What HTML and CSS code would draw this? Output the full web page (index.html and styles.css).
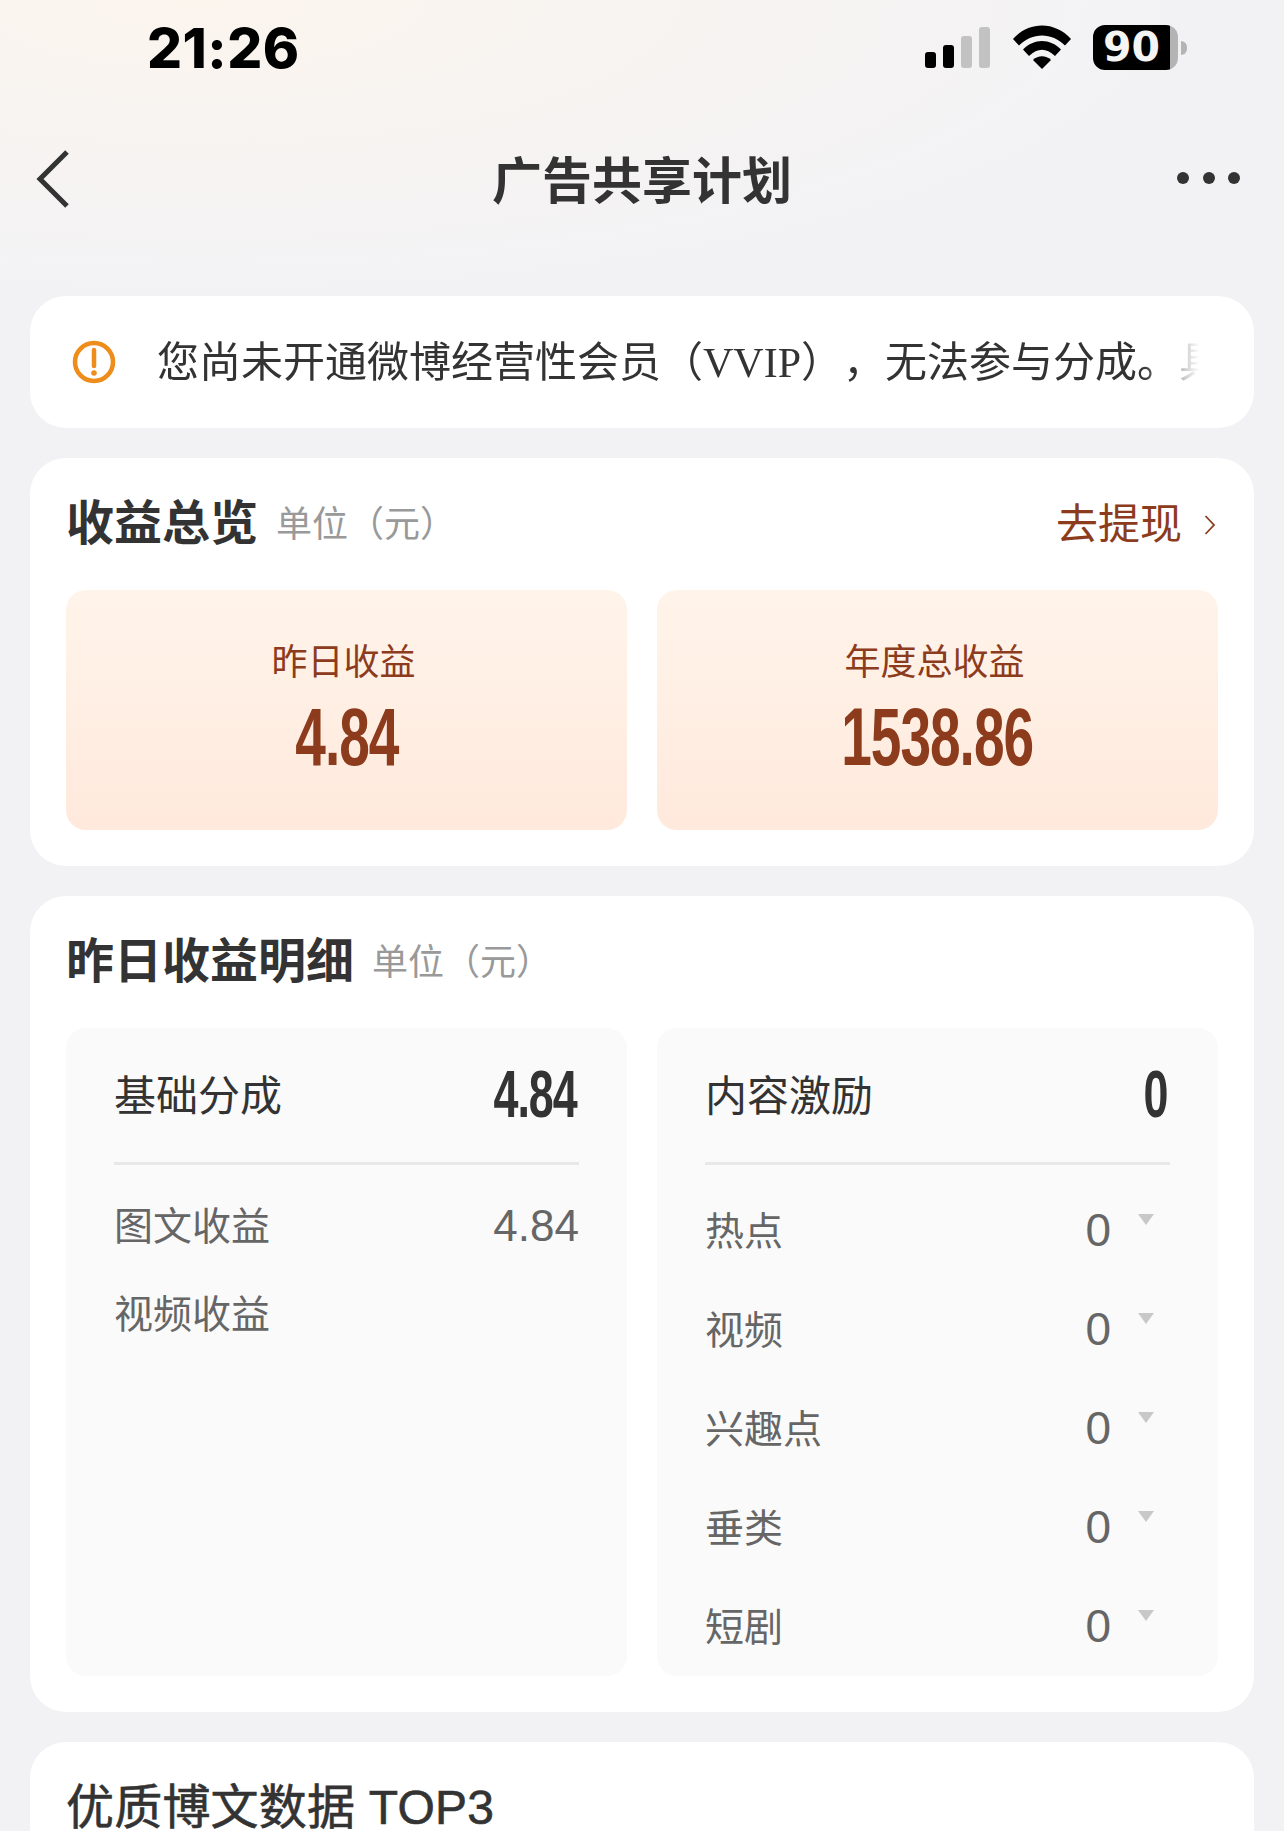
FILE: index.html
```html
<!DOCTYPE html>
<html lang="zh-CN">
<head>
    <meta charset="UTF-8">
    <meta name="viewport" content="width=device-width, initial-scale=1.0">
    <title>广告共享计划</title>
    <link rel="stylesheet" href="styles.css">
</head>
<body>

<div class="page">
    <!-- 状态栏 -->
    <div class="status-bar">
        <span class="time">21:26</span>
        <div class="status-icons">
            <div class="signal">
                <i class="bar bar-1"></i>
                <i class="bar bar-2"></i>
                <i class="bar bar-3 off"></i>
                <i class="bar bar-4 off"></i>
            </div>
            <svg class="wifi" width="58" height="44" viewBox="0 0 58 44">
                <path d="M0 14 C16 -4 42 -4 58 14 L52 20.500 C39 7 19 7 6 20.500 Z" fill="#000"/>
                <path d="M10 24.500 C21 13 37 13 48 24.500 L42 31 C33 22.500 25 22.500 16 31 Z" fill="#000"/>
                <path d="M20 35 C25 30 33 30 38 35 L29 44 Z" fill="#000"/>
            </svg>
            <div class="battery">
                <div class="battery-body"><span class="battery-num">90</span></div>
                <i class="battery-nub"></i>
            </div>
        </div>
    </div>

    <!-- 导航 -->
    <div class="nav">
        <svg class="back" width="36" height="58" viewBox="0 0 36 58">
            <path d="M32 2 L5 29 L32 56" fill="none" stroke="#333" stroke-width="5"/>
        </svg>
        <h1 class="nav-title">广告共享计划</h1>
        <div class="more"><i></i><i></i><i></i></div>
    </div>

    <!-- 提示 -->
    <div class="card notice">
        <svg class="notice-icon" width="44" height="44" viewBox="0 0 44 44">
            <circle cx="22" cy="22" r="19" fill="none" stroke="#ee8d1c" stroke-width="4.500"/>
            <path d="M22 10 V26" stroke="#ee8d1c" stroke-width="4.500" stroke-linecap="round"/>
            <circle cx="22" cy="33" r="2.800" fill="#ee8d1c"/>
        </svg>
        <div class="notice-text">您尚未开通微博经营性会员（<span class="latin">VVIP</span>），无法参与分成。具体规则请查看详情</div>
    </div>

    <!-- 收益总览 -->
    <div class="card">
        <div class="card-head">
            <h2 class="card-title">收益总览</h2>
            <span class="unit">单位（元）</span>
            <a class="withdraw">去提现
                <svg width="12" height="22" viewBox="0 0 12 22">
                    <path d="M1.500 2 L10 11 L1.500 20" fill="none" stroke="#8c3c1c" stroke-width="1.800"/>
                </svg>
            </a>
        </div>
        <div class="two-col">
            <div class="stat">
                <div class="stat-label">昨日收益</div>
                <div class="stat-num">4.84</div>
            </div>
            <div class="stat">
                <div class="stat-label">年度总收益</div>
                <div class="stat-num">1538.86</div>
            </div>
        </div>
    </div>

    <!-- 昨日收益明细 -->
    <div class="card">
        <div class="card-head">
            <h2 class="card-title">昨日收益明细</h2>
            <span class="unit">单位（元）</span>
        </div>
        <div class="two-col">
            <div class="detail">
                <div class="detail-head">
                    <span class="detail-name">基础分成</span>
                    <span class="detail-total">4.84</span>
                </div>
                <div class="plain-row"><span>图文收益</span><span class="plain-val">4.84</span></div>
                <div class="plain-row"><span>视频收益</span></div>
            </div>
            <div class="detail">
                <div class="detail-head">
                    <span class="detail-name">内容激励</span>
                    <span class="detail-total">0</span>
                </div>
                <div class="rows">
                    <div class="row"><span>热点</span><span class="row-val">0</span><i class="caret"></i></div>
                    <div class="row"><span>视频</span><span class="row-val">0</span><i class="caret"></i></div>
                    <div class="row"><span>兴趣点</span><span class="row-val">0</span><i class="caret"></i></div>
                    <div class="row"><span>垂类</span><span class="row-val">0</span><i class="caret"></i></div>
                    <div class="row"><span>短剧</span><span class="row-val">0</span><i class="caret"></i></div>
                </div>
            </div>
        </div>
    </div>

    <!-- 优质博文 -->
    <div class="card last">
        <div class="card-head">
            <h2 class="card-title thin">优质博文数据 TOP3</h2>
        </div>
    </div>
</div>

</body>
</html>
```

FILE: styles.css
```css
* {
    box-sizing: border-box;
}
html, body {
    margin: 0;
    padding: 0;
}
body {
    font-family: "Liberation Sans", "Noto Sans CJK SC", sans-serif;
    color: #333;
    background-color: #f2f2f5;
}
.page {
    height: 1831px;
    overflow: hidden;
    padding: 0 30px;
    background:
        radial-gradient(ellipse 1000px 300px at 200px 0, #fcf5ee 0%, rgba(252, 245, 238, 0) 100%),
        #f2f2f5;
    background-repeat: no-repeat;
}

/* status bar */
.status-bar {
    height: 97px;
    display: flex;
    justify-content: space-between;
    align-items: flex-start;
    padding: 25px 67px 0 117px;
}
.time {
    font-family: "Inter", sans-serif;
    font-size: 55px;
    font-weight: 800;
    line-height: 46px;
    letter-spacing: 0.5px;
    color: #000;
}
.status-icons {
    display: flex;
    align-items: flex-start;
}
.signal {
    display: flex;
    align-items: flex-end;
    gap: 7px;
    height: 41px;
    margin-top: 2px;
}
.bar {
    display: block;
    width: 11px;
    background-color: #000;
    border-radius: 3px;
}
.bar.off {
    background-color: #c2c2c2;
}
.bar-1 { height: 16px; }
.bar-2 { height: 23px; }
.bar-3 { height: 32px; }
.bar-4 { height: 41px; }
.wifi {
    margin-left: 23px;
}
.battery {
    display: flex;
    align-items: center;
    margin-left: 22px;
}
.battery-body {
    width: 85px;
    height: 45px;
    border-radius: 12px;
    background: linear-gradient(to right, #000 0, #000 77px, #b4b4b4 77px);
    display: flex;
    justify-content: center;
    align-items: center;
    padding-right: 8px;
}
.battery-num {
    font-family: "DejaVu Sans", sans-serif;
    font-size: 41px;
    font-weight: 700;
    line-height: 45px;
    color: #f4f4f4;
}
.battery-nub {
    display: block;
    width: 6px;
    height: 14px;
    margin-left: 3px;
    background-color: #b4b4b4;
    border-radius: 0 7px 7px 0;
}

/* nav */
.nav {
    height: 199px;
    display: grid;
    grid-template-columns: 1fr auto 1fr;
    align-items: start;
}
.back {
    margin: 53px 0 0 5px;
}
.nav-title {
    margin: 58px 0 0;
    font-size: 50px;
    font-weight: 700;
    line-height: 54px;
    color: #333;
}
.more {
    display: flex;
    justify-self: end;
    gap: 13.500px;
    margin: 75px 14px 0 0;
}
.more i {
    display: block;
    width: 12px;
    height: 12px;
    border-radius: 50%;
    background-color: #333;
}

/* cards */
.card {
    background-color: #fff;
    border-radius: 36px;
    padding: 0 36px 36px;
    margin-bottom: 30px;
}
.notice {
    height: 132px;
    padding: 0 36px 0 42px;
    display: flex;
    align-items: center;
}
.notice-icon {
    flex: none;
}
.notice-text {
    margin-left: 41px;
    margin-top: 2px;
    width: 1042px;
    white-space: nowrap;
    overflow: hidden;
    font-size: 42px;
    line-height: 60px;
    color: #333;
    text-spacing-trim: space-all;
    -webkit-mask-image: linear-gradient(to right, #000 0, #000 985px, transparent 1042px);
    mask-image: linear-gradient(to right, #000 0, #000 985px, transparent 1042px);
}
.latin {
    font-family: "Liberation Serif", serif;
}
.card-head {
    height: 132px;
    display: flex;
    align-items: flex-start;
    padding-top: 36px;
}
.card-title {
    margin: 0;
    font-size: 48px;
    font-weight: 700;
    line-height: 60px;
    color: #333;
}
.card-title.thin {
    font-weight: 400;
    letter-spacing: 0.2px;
    -webkit-text-stroke: 0.6px #333;
}
.unit {
    margin-left: 18px;
    margin-top: 1px;
    font-size: 36px;
    line-height: 60px;
    color: #999;
}
.withdraw {
    margin-left: auto;
    margin-top: 1px;
    display: flex;
    align-items: center;
    gap: 22px;
    padding-right: 2px;
    font-size: 42px;
    line-height: 60px;
    color: #8c3c1c;
}
.two-col {
    display: grid;
    grid-template-columns: 561px 561px;
    gap: 30px;
}

/* stat boxes */
.stat {
    height: 240px;
    border-radius: 20px;
    background: linear-gradient(to bottom, #fff4ea, #ffe9dc);
    display: flex;
    flex-direction: column;
    align-items: center;
    padding-top: 49px;
}
.stat-label {
    font-size: 36px;
    line-height: 48px;
    color: #8c3c1c;
    margin-left: -6px;
}
.stat-num {
    font-size: 81px;
    font-weight: 700;
    line-height: 76px;
    letter-spacing: -1.500px;
    margin-top: 12px;
    color: #8c3c1c;
    transform: scaleX(0.68);
}

/* detail boxes */
.detail {
    height: 648px;
    border-radius: 20px;
    background-color: #fafafa;
    padding: 0 48px;
}
.detail-head {
    height: 137px;
    border-bottom: 3px solid #e8e8e8;
    display: flex;
    justify-content: space-between;
    align-items: center;
}
.detail-name {
    font-size: 42px;
    line-height: 60px;
    margin-top: 4px;
    color: #333;
}
.detail-total {
    font-size: 66px;
    font-weight: 700;
    line-height: 60px;
    letter-spacing: -1.500px;
    padding-right: 4px;
    margin-top: -2px;
    color: #333;
    transform: scaleX(0.68);
    transform-origin: right center;
}
.plain-row {
    height: 88px;
    display: flex;
    justify-content: space-between;
    align-items: center;
    font-size: 39px;
    color: #666;
}
.plain-row:nth-child(2) {
    margin-top: 14px;
}
.plain-val {
    font-size: 44px;
    line-height: 44px;
    margin-top: 5px;
}
.rows {
    padding-top: 13px;
}
.row {
    height: 99px;
    display: flex;
    align-items: center;
    position: relative;
    font-size: 39px;
    color: #666;
}
.row-val {
    margin-left: auto;
    margin-right: 59px;
    margin-top: 4px;
    font-size: 46px;
    line-height: 50px;
}
.row .caret {
    position: absolute;
    right: 16px;
    top: 36px;
    width: 0;
    height: 0;
    border-left: 8.500px solid transparent;
    border-right: 8.500px solid transparent;
    border-top: 11px solid #c8c8c8;
}
```
